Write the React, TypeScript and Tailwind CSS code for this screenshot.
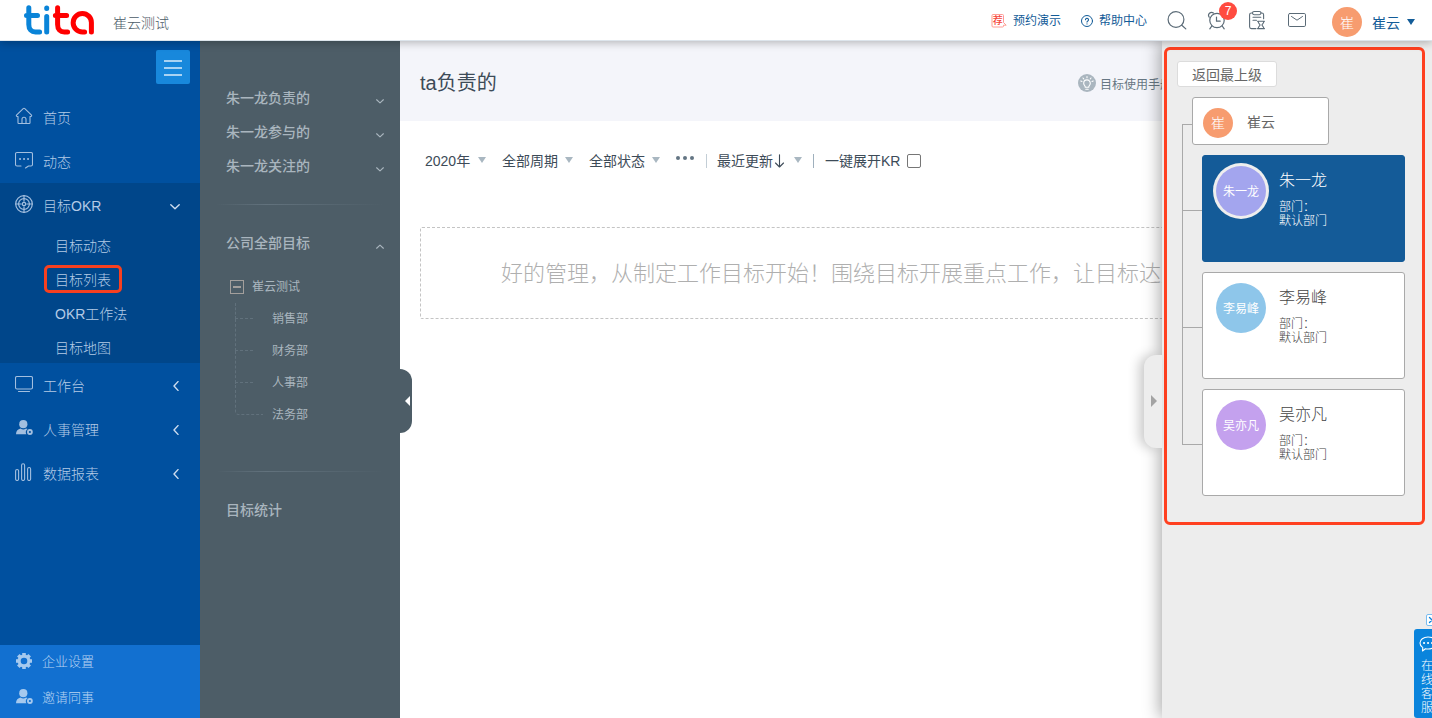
import React from "react";

type IconProps = { className?: string };

const line = {
  fill: "none",
  stroke: "currentColor",
  strokeWidth: 1,
  strokeLinecap: "round" as const,
  strokeLinejoin: "round" as const,
};

function Logo() {
  return (
    <svg viewBox="0 0 70 30" className="h-[30px] w-[70px]" role="img" aria-label="tita">
      <g fill="none" strokeWidth="5" strokeLinecap="round" strokeLinejoin="round">
        <path stroke="#0a84d8" d="M4.8 2.8V19.500C4.8 24.5 7.5 27 11.5 27H15.600M2.500 10.5H13.500" />
        <path stroke="#0a84d8" d="M22.7 11.5V27M22.7 3v.6" />
        <path stroke="#ff0000" d="M33.6 2.8V19.500C33.6 24.5 36.3 27 40.3 27H43.6M31.4 10.5H42.6" />
        <path stroke="#ff0000" d="M67.4 27V17.500A9 9 0 0 0 58.4 8.500A9.250 9.250 0 0 0 58.4 27H60.6" />
      </g>
    </svg>
  );
}

function HomeIcon({ className }: IconProps) {
  return (
    <svg viewBox="0 0 18 18" className={className} {...line} strokeWidth={1.1}>
      <path d="M1.500 8.200L8.200 1.600a1.200 1.200 0 0 1 1.600 0l6.700 6.600c.4.5 0 1.300-.6 1.300h-.9v6.200c0 .5-.3.800-.8.800H3.800c-.5 0-.8-.3-.8-.8V9.500h-.9c-.6 0-1-.8-.6-1.300z" />
      <path d="M7 16.300v-4a2 2 0 0 1 4 0v4" />
    </svg>
  );
}

function ChatIcon({ className }: IconProps) {
  return (
    <svg viewBox="0 0 18 18" className={className} {...line} strokeWidth={1.1}>
      <path d="M6 15H2A1.500 1.500 0 0 1 .5 13.500V3A1.500 1.500 0 0 1 2 1.500h14A1.500 1.500 0 0 1 17.500 3v10.500a1.500 1.500 0 0 1-1.500 1.500h-2.500l-3 2" />
      <path d="M5 8h.1M9 8h.1M13 8h.1" strokeWidth="1.900" />
    </svg>
  );
}

function TargetIcon({ className }: IconProps) {
  return (
    <svg viewBox="0 0 18 18" className={className} {...line} strokeWidth={1.2}>
      <circle cx="9" cy="9" r="8.300" />
      <circle cx="9" cy="9" r="5.400" />
      <circle cx="9" cy="9" r="1.700" />
      <path d="M9 .7v5.500M9 11.800v5.500M.7 9h5.500M11.800 9h5.500" />
    </svg>
  );
}

function MonitorIcon({ className }: IconProps) {
  return (
    <svg viewBox="0 0 18 18" className={className} {...line} strokeWidth={1.1}>
      <rect x=".5" y="1.500" width="17" height="12.500" rx="1.500" />
      <path d="M3.500 16.500h11" />
    </svg>
  );
}

function PersonIcon({ className }: IconProps) {
  return (
    <svg viewBox="0 0 18 18" className={className} fill="currentColor">
      <circle cx="8.300" cy="5.200" r="4.100" />
      <path d="M1 15.300c0-3.300 2-5.300 4.600-5.800.9.700 1.800 1 2.700 1s1.800-.3 2.700-1c.6.1 1.100.3 1.600.6a3.600 3.600 0 0 0-1.200 5.200z" />
      <circle cx="14.900" cy="13" r="2" fill="none" stroke="currentColor" strokeWidth="1.800" />
    </svg>
  );
}

function BarsIcon({ className }: IconProps) {
  return (
    <svg viewBox="0 0 18 18" className={className} {...line} strokeWidth={1.1}>
      <rect x=".6" y="6.500" width="3" height="11" rx="1.500" />
      <rect x="6.600" y=".8" width="3" height="16.700" rx="1.500" />
      <rect x="12.600" y="4.500" width="3" height="13" rx="1.500" />
    </svg>
  );
}

function GearIcon({ className }: IconProps) {
  return (
    <svg viewBox="0 0 18 18" className={className}>
      <circle cx="9" cy="9" r="4.900" fill="none" stroke="currentColor" strokeWidth="3.200" />
      <g stroke="currentColor" strokeWidth="3.600">
        <path d="M9 1v2.500M9 14.500V17M1 9h2.500M14.500 9H17M3.300 3.300l1.800 1.800M12.900 12.900l1.800 1.800M3.300 14.700l1.800-1.800M12.900 5.100l1.800-1.800" />
      </g>
    </svg>
  );
}

function Chevron({ className }: IconProps) {
  return (
    <svg viewBox="0 0 10 6" className={className} {...line} strokeWidth={1.4}>
      <path d="M.8.8L5 4.800 9.200.8" />
    </svg>
  );
}

function ChevronLeft({ className }: IconProps) {
  return (
    <svg viewBox="0 0 6 10" className={className} {...line} strokeWidth={1.4}>
      <path d="M5 .6L1 5l4 4.400" />
    </svg>
  );
}

function Caret({ className }: IconProps) {
  return (
    <svg viewBox="0 0 8 6" className={className} fill="currentColor">
      <path d="M0 0h8L4 6z" />
    </svg>
  );
}

function RecommendIcon() {
  return (
    <svg viewBox="0 0 16 16" className="h-4 w-4">
      <path
        d="M12.500 9.500V2.500a1 1 0 0 0-1-1h-9.500a1 1 0 0 0-1 1v10.500a1 1 0 0 0 1 1h9.500a1 1 0 0 0 1-1v-.8h2.700l-2.700-2.700"
        fill="none"
        stroke="#ff9d94"
      />
      <text x="6.700" y="11.300" fontSize="10" fontWeight="500" textAnchor="middle" fill="#f5443a">
        荐
      </text>
    </svg>
  );
}

function HelpIcon() {
  return (
    <svg viewBox="0 0 12 12" className="h-3 w-3" {...line}>
      <circle cx="6" cy="6" r="5.500" />
      <path d="M4.500 4.700a1.500 1.500 0 1 1 2.300 1.300c-.5.3-.8.5-.8 1.100M6 8.800v.1" strokeWidth="1.100" />
    </svg>
  );
}

function SearchIcon() {
  return (
    <svg viewBox="0 0 20 20" className="h-5 w-5" {...line} strokeWidth={1.2}>
      <circle cx="9" cy="9.500" r="7.900" />
      <path d="M14.800 15.200L18.800 18.900" />
    </svg>
  );
}

function ClockIcon() {
  return (
    <svg viewBox="0 0 20 20" className="h-5 w-5" {...line} strokeWidth={1.2}>
      <circle cx="10" cy="10.500" r="7.200" />
      <path d="M9.500 7v4.200h3.700M4.800 16l-2 2.800M15.200 16l2 2.800" />
      <path d="M2.200 7.200A3 3 0 0 1 6.400 3M13.600 3a3 3 0 0 1 4.200 4.200" />
    </svg>
  );
}

function ClipboardIcon() {
  return (
    <svg viewBox="0 0 18 20" className="h-5 w-[18px]" {...line} strokeWidth={1.1}>
      <path d="M4.500 3H3.400a1.800 1.800 0 0 0-1.800 1.800v12a1.800 1.800 0 0 0 1.800 1.800H8M13 3h.8a1.800 1.800 0 0 1 1.800 1.800v4" />
      <rect x="4.500" y="1.500" width="8.500" height="3.200" rx="1.600" />
      <path d="M5 7.300h7.800M5 10.200h3.500" />
      <path d="M9.500 11.300h7M9.500 18.600h7M10.300 11.300c-.5 2 1.700 2.600 1.700 3.600s-2.200 1.700-1.700 3.700M15.700 11.300c.5 2-1.700 2.600-1.700 3.600s2.200 1.700 1.700 3.700" />
    </svg>
  );
}

function MailIcon() {
  return (
    <svg viewBox="0 0 18 14" className="h-[14px] w-[18px]" {...line}>
      <rect x=".5" y=".5" width="17" height="13" rx="1.300" />
      <path d="M3.500 3.500L9 7.200l5.500-3.700" />
    </svg>
  );
}

function BulbIcon() {
  return (
    <svg viewBox="0 0 18 18" className="h-[18px] w-[18px]">
      <circle cx="9" cy="9" r="9" fill="#aab6bf" />
      <g fill="none" stroke="#fff" strokeLinecap="round" strokeWidth="1.100">
        <path d="M7.300 13.200c0-1.600-1.600-1.900-1.600-4a3.300 3.300 0 0 1 6.600 0c0 2.100-1.600 2.400-1.600 4zM7.800 15.300h2.400M9 2.500v1.200M5 4l.8 1M13 4l-.8 1M2.800 7l1.200.4M15.200 7l-1.200.4" />
      </g>
    </svg>
  );
}

function Header() {
  return (
    <header className="relative z-30 flex h-[41px] shrink-0 items-center justify-between border-b border-[#dde5ec] bg-white pr-[17px] pl-6 shadow-[0_2px_8px_rgba(0,0,0,0.25)]">
      <div className="flex items-center gap-[19px]">
        <a href="#home">
          <Logo />
        </a>
        <span className="pt-[6px] text-sm font-light text-[#4b5b67]">崔云测试</span>
      </div>
      <div className="flex items-center text-[#5b6b77]">
        <a href="#demo" className="flex items-center gap-1.5 pt-px text-xs text-[#135c98]">
          <RecommendIcon />
          预约演示
        </a>
        <a href="#help" className="ml-5 flex items-center gap-1.5 pt-px text-xs text-[#135c98]">
          <HelpIcon />
          帮助中心
        </a>
        <button aria-label="搜索" className="ml-5">
          <SearchIcon />
        </button>
        <button aria-label="提醒" className="relative ml-5">
          <ClockIcon />
          <span className="absolute -top-2 -right-[10px] flex h-[18px] w-[18px] items-center justify-center rounded-full bg-[#ff4b40] text-xs text-white">
            7
          </span>
        </button>
        <button aria-label="任务" className="ml-[21px]">
          <ClipboardIcon />
        </button>
        <button aria-label="邮件" className="ml-[22px]">
          <MailIcon />
        </button>
        <button className="ml-[26px] flex items-center pt-1 text-sm text-[#135c98]">
          <span className="mr-[10px] flex h-[30px] w-[30px] items-center justify-center rounded-full bg-[#f79c6f] pt-px font-light text-white">
            崔
          </span>
          <span className="pt-px">崔云</span>
          <Caret className="ml-[7px] h-[6px] w-2" />
        </button>
      </div>
    </header>
  );
}

function NavItem({ icon, label, arrow }: { icon: React.ReactNode; label: string; arrow?: "down" | "left" }) {
  return (
    <a href="#nav" className="flex h-11 items-center gap-[10px] pt-[2px] pr-5 pl-[15px] text-sm">
      {icon}
      <span className="flex-1">{label}</span>
      {arrow === "down" && <Chevron className="mt-[2px] h-[6px] w-[10px] text-[#cfdef0]" />}
      {arrow === "left" && <ChevronLeft className="mr-px h-[10px] w-[6px] text-[#cfdef0]" />}
    </a>
  );
}

const okrPages = ["目标动态", "目标列表", "OKR工作法", "目标地图"];

function Sidebar() {
  const icon = "mb-1 h-[18px] w-[18px] text-[#a3bfdf]";
  return (
    <nav className="flex w-[200px] shrink-0 flex-col bg-[#00509f] font-light text-[#b4cbe6]">
      <div className="flex justify-end pt-[9px] pr-[10px] pb-[11px]">
        <button
          aria-label="收起菜单"
          className="flex h-[34px] w-[34px] flex-col items-center justify-center gap-[5px] rounded-xs bg-[#1888dc] pt-[2px]"
        >
          <span className="h-[2px] w-[18px] bg-[#a9d3f3]" />
          <span className="h-[2px] w-[18px] bg-[#a9d3f3]" />
          <span className="h-[2px] w-[18px] bg-[#a9d3f3]" />
        </button>
      </div>
      <NavItem icon={<HomeIcon className={icon} />} label="首页" />
      <NavItem icon={<ChatIcon className={icon} />} label="动态" />
      <div className="bg-[#00468a]">
        <NavItem icon={<TargetIcon className={icon} />} label="目标OKR" arrow="down" />
        <ul>
          {okrPages.map((page) => (
            <li key={page} className="flex h-[34px] items-center pt-px pl-11 text-sm">
              <a
                href="#okr"
                className={
                  page === "目标列表"
                    ? "rounded-[5px] border-[3px] border-[#f8401f] px-2 pt-[2px] leading-5"
                    : "border-[3px] border-transparent px-2 pt-[2px] leading-5"
                }
              >
                {page}
              </a>
            </li>
          ))}
        </ul>
      </div>
      <NavItem icon={<MonitorIcon className={icon} />} label="工作台" arrow="left" />
      <NavItem icon={<PersonIcon className={icon} />} label="人事管理" arrow="left" />
      <NavItem icon={<BarsIcon className={icon} />} label="数据报表" arrow="left" />
      <div className="mt-auto flex flex-col gap-1 bg-[#1270d0] pb-[5px] text-[13px] text-[#b8d4f2]">
        <a href="#settings" className="flex h-8 items-center gap-[9px] pt-px pl-[15px]">
          <GearIcon className="mb-[2px] h-[18px] w-[18px] text-[#a6c9ee]" />
          企业设置
        </a>
        <a href="#invite" className="flex h-8 items-center gap-[9px] pt-px pl-[15px]">
          <PersonIcon className="mb-[2px] h-[18px] w-[18px] text-[#a6c9ee]" />
          邀请同事
        </a>
      </div>
    </nav>
  );
}

const departments = ["销售部", "财务部", "人事部", "法务部"];

function Divider() {
  return (
    <div className="mr-4 ml-4 h-px bg-linear-to-r from-transparent via-[#62727d] via-30% to-transparent" />
  );
}

function GoalGroup({ label, open }: { label: string; open?: boolean }) {
  return (
    <button className="flex h-[34px] w-full items-center justify-between pr-4 pl-[26px] text-sm font-medium">
      {label}
      <Chevron className={open ? "mt-1.5 h-[5px] w-2 rotate-180" : "mt-1.5 h-[5px] w-2"} />
    </button>
  );
}

function GoalPanel() {
  return (
    <aside className="relative w-[200px] shrink-0 bg-[#4d5d67] text-[#a9b5be]">
      <div className="pt-10 pb-[21px]">
        <GoalGroup label="朱一龙负责的" />
        <GoalGroup label="朱一龙参与的" />
        <GoalGroup label="朱一龙关注的" />
      </div>
      <Divider />
      <div className="pt-[21px] pb-10">
        <GoalGroup label="公司全部目标" open />
        <div className="pt-[11px] text-xs">
          <div className="flex h-8 items-center gap-2 pl-[30px]">
            <button
              aria-label="折叠"
              className="flex h-[14px] w-[14px] items-center justify-center border border-[#a39f9c]"
            >
              <span className="h-[2px] w-2 bg-[#a39f9c]" />
            </button>
            崔云测试
          </div>
          <ul>
            {departments.map((name, i) => (
              <li key={name} className="relative flex h-8 items-center pl-[72px]">
                <span
                  className={
                    i === departments.length - 1
                      ? "absolute -top-4 left-[35px] h-8 w-7 rounded-bl border-b border-l border-dashed border-[#61717c]"
                      : i === 0
                        ? "absolute top-0 left-[35px] h-4 w-[18px] border-b border-l border-dashed border-[#61717c]"
                        : "absolute -top-4 left-[35px] h-8 w-[18px] border-b border-l border-dashed border-[#61717c]"
                  }
                />
                {name}
              </li>
            ))}
          </ul>
        </div>
      </div>
      <Divider />
      <a href="#stats" className="mt-[21px] flex h-[34px] items-center pl-[26px] text-sm font-medium">
        目标统计
      </a>
      <button
        aria-label="收起面板"
        className="absolute top-[328px] left-full z-10 flex h-16 w-3 items-center justify-end rounded-r-xl bg-[#4d5d67] pr-[2px] text-white"
      >
        <svg viewBox="0 0 5 10" className="h-[10px] w-[5px]" fill="currentColor">
          <path d="M5 0v10L0 5z" />
        </svg>
      </button>
    </aside>
  );
}

function Filter({ label, value }: { label: string; value: string }) {
  return (
    <label className="flex items-center gap-[7px]">
      <select aria-label={label} className="appearance-none bg-transparent">
        <option>{value}</option>
      </select>
      <Caret className="mb-[2px] h-[6px] w-2 text-[#a9b7c1]" />
    </label>
  );
}

function Content() {
  return (
    <main className="min-w-0 flex-1 bg-white text-[#3d4b58]">
      <div className="flex h-20 items-center justify-between bg-[#f4f5fa] pr-[260px] pl-5">
        <h1 className="pt-[3px] text-xl">ta负责的</h1>
        <a href="#manual" className="flex items-center gap-1 pt-1 text-xs whitespace-nowrap text-[#677783]">
          <BulbIcon />
          <span className="pt-[3px]">目标使用手册</span>
        </a>
      </div>
      <div className="flex h-20 items-center pl-[25px] text-sm whitespace-nowrap">
        <div className="flex items-center gap-4">
          <Filter label="年度" value="2020年" />
          <Filter label="周期" value="全部周期" />
          <Filter label="状态" value="全部状态" />
          <button aria-label="更多筛选" className="mb-[6px] flex gap-[3px]">
            <span className="h-1 w-1 rounded-full bg-[#647584]" />
            <span className="h-1 w-1 rounded-full bg-[#647584]" />
            <span className="h-1 w-1 rounded-full bg-[#647584]" />
          </button>
        </div>
        <span className="mr-[10px] ml-3 h-[14px] w-px bg-[#c3ced6]" />
        <button className="flex items-center">
          最近更新
          <svg viewBox="0 0 12 14" className="h-[14px] w-3" {...line} strokeWidth={1.1}>
            <path d="M6.500 .7v12.300M2.500 9l4 4 4-4" />
          </svg>
          <Caret className="mb-[2px] ml-[9px] h-[6px] w-2 text-[#a9b7c1]" />
        </button>
        <span className="mx-[11px] h-[14px] w-px bg-[#9fb0bd]" />
        <label className="flex items-center gap-[7px]">
          一键展开KR
          <input
            type="checkbox"
            className="h-[14px] w-[14px] appearance-none rounded-xs border border-[#767676] bg-white"
          />
        </label>
      </div>
      <div className="mx-5 mt-[26px] flex h-[92px] items-center overflow-hidden rounded-xs border border-dashed border-[#c4c4c4] pl-20 text-[22px] font-light whitespace-nowrap text-[#afafaf]">
        好的管理，从制定工作目标开始！围绕目标开展重点工作，让目标达成
      </div>
    </main>
  );
}

type Member = { name: string; avatar: string; active?: boolean };

const members: Member[] = [
  { name: "朱一龙", avatar: "bg-[#a3a5ee] ring-3 ring-[#eeeeee]", active: true },
  { name: "李易峰", avatar: "bg-[#8ec6ea]" },
  { name: "吴亦凡", avatar: "bg-[#c4a1ee]" },
];

function MemberCard({ member }: { member: Member }) {
  return (
    <a
      href="#member"
      className={
        member.active
          ? "flex h-[107px] gap-[13px] rounded-[3px] border border-[#145b98] bg-[#145b98] pt-[10px] pl-[13px] font-light text-white"
          : "flex h-[107px] gap-[13px] rounded-[3px] border border-[#a9a9a9] bg-white pt-[10px] pl-[13px] font-light text-[#444444]"
      }
    >
      <span
        className={`flex h-[50px] w-[50px] shrink-0 items-center justify-center rounded-full pt-[2px] text-xs font-normal text-white ${member.avatar}`}
      >
        {member.name}
      </span>
      <span className="flex flex-col pt-[3px]">
        <span className="mb-[7px] text-base leading-6">{member.name}</span>
        <span className="text-xs leading-[14px]">部门：</span>
        <span className="text-xs leading-[14px]">默认部门</span>
      </span>
    </a>
  );
}

function Drawer() {
  return (
    <aside className="absolute inset-y-0 right-0 z-20 w-[270px] bg-[#ededed] pt-[6px] pr-[7px] pl-[2px] shadow-[-2px_0_16px_rgba(0,0,0,0.35)]">
      <button
        aria-label="收起组织"
        className="absolute top-[314px] right-full flex h-[93px] w-[18px] items-center justify-center rounded-l-xl bg-[#ededed] pb-[2px] pl-[2px] text-[#a3a3a3] shadow-[-5px_0_12px_rgba(0,0,0,0.2)]"
      >
        <svg viewBox="0 0 6 12" className="h-3 w-[6px]" fill="currentColor">
          <path d="M0 0v12l6-6z" />
        </svg>
      </button>
      <section className="rounded-md border-[3px] border-[#ff4020] pt-[11px] pr-[17px] pb-[26px] pl-[10px]">
        <button className="h-[26px] w-[100px] rounded-[3px] border border-[#dcdcdc] bg-white pt-[2px] text-sm leading-5 text-[#666666]">
          返回最上级
        </button>
        <ul className="mt-[10px] ml-[5px] flex flex-col gap-[10px]">
          <li className="relative pl-[10px]">
            <span className="absolute top-[27px] left-0 h-[31px] w-[10px] border-t border-l border-[#a9a9a9]" />
            <a
              href="#member"
              className="flex h-12 w-[137px] items-center gap-[14px] rounded-[3px] border border-[#a9a9a9] bg-white pl-[10px] text-sm text-[#666666]"
            >
              <span className="mt-1 flex h-[30px] w-[30px] items-center justify-center rounded-full bg-[#f79c6f] font-light text-white">
                崔
              </span>
              <span className="pt-[2px]">崔云</span>
            </a>
          </li>
          {members.map((member, i) => (
            <li key={member.name} className="relative pl-5">
              <span
                className={
                  i === 0
                    ? "absolute top-0 left-0 h-14 w-5 border-b border-l border-[#a9a9a9]"
                    : "absolute -top-[62px] left-0 h-[118px] w-5 border-b border-l border-[#a9a9a9]"
                }
              />
              <MemberCard member={member} />
            </li>
          ))}
        </ul>
      </section>
    </aside>
  );
}

function ServiceTab() {
  return (
    <div className="fixed right-0 bottom-0 z-40 w-[18px] overflow-hidden">
      <button
        aria-label="关闭"
        className="ml-3 flex h-3 w-3 items-center justify-center rounded-[2px] border border-[#79bdf0] bg-white text-[#0a84dc]"
      >
        <svg viewBox="0 0 8 8" className="h-2 w-2 shrink-0" {...line} strokeWidth={1.3}>
          <path d="M1.500 1.500l5 5M6.500 1.500l-5 5" />
        </svg>
      </button>
      <a href="#service" className="mt-[3px] block h-[89px] w-6 rounded-l-[3px] bg-[#0a84dc] pt-[7px] text-white">
        <svg viewBox="0 0 18 16" className="ml-[5px] h-4 w-[18px]" {...line} strokeWidth={1.1}>
          <path d="M9 1c4.600 0 8 2.500 8 6s-3.400 6-8 6c-1 0-1.800-.1-2.600-.3L3.500 15l.3-3.400C2 10.500 1 8.900 1 7c0-3.500 3.400-6 8-6z" />
          <path d="M5 7h.1M9 7h.1M13 7h.1" strokeWidth="2" />
        </svg>
        <span className="mt-[7px] ml-[7px] block w-3 text-xs leading-[14px] font-light">在线客服</span>
      </a>
    </div>
  );
}

export default function App() {
  return (
    <div className="flex min-h-screen flex-col font-['Liberation_Sans','Noto_Sans_CJK_SC',sans-serif]">
      <Header />
      <div className="relative flex flex-1 overflow-hidden">
        <Sidebar />
        <GoalPanel />
        <Content />
        <Drawer />
      </div>
      <ServiceTab />
    </div>
  );
}
